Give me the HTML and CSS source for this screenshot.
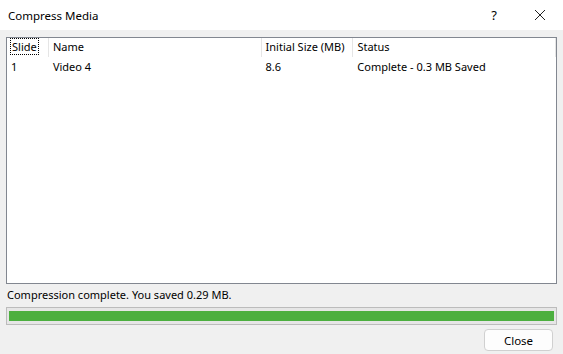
FILE: index.html
```html
<!DOCTYPE html>
<html lang="en">

<head>
    <meta charset="UTF-8">
    <meta name="viewport" content="width=device-width, initial-scale=1.0">
    <title>Compress Media</title>
    <link rel="stylesheet" href="styles.css">
</head>

<body>
    <div class="dialog">
        <header class="titlebar">
            <span class="title">Compress Media</span>
            <span class="help">?</span>
            <span class="close-x">
                <svg width="12" height="12" viewBox="0 0 12 12">
                    <path d="M1 1 L11 11 M11 1 L1 11" stroke="#222" stroke-width="1" fill="none"/>
                </svg>
            </span>
        </header>

        <section class="content">
            <div class="listbox">
                <div class="row head">
                    <div class="cell c-slide"><span class="focus">Slide</span></div>
                    <div class="cell c-name">Name</div>
                    <div class="cell c-size">Initial Size (MB)</div>
                    <div class="cell c-status">Status</div>
                </div>
                <div class="row">
                    <div class="cell c-slide">1</div>
                    <div class="cell c-name">Video 4</div>
                    <div class="cell c-size">8.6</div>
                    <div class="cell c-status">Complete - 0.3 MB Saved</div>
                </div>
            </div>

            <p class="message">Compression complete. You saved 0.29 MB.</p>

            <div class="progress">
                <div class="progress-fill" style="width: 100%"></div>
            </div>

            <div class="buttons">
                <button class="btn">Close</button>
            </div>
        </section>
    </div>
</body>

</html>
```

FILE: styles.css
```css
body {
    margin: 0;
    padding: 0;
    background-color: #f0f0f0;
    font-family: "Noto Sans", "Open Sans", sans-serif;
    font-size: 11px;
    color: #000;
}

.dialog {
    width: 563px;
    height: 354px;
    display: flex;
    flex-direction: column;
}

.titlebar {
    height: 30px;
    background-color: #fff;
    display: flex;
    align-items: center;
    padding-left: 8px;
}

.title {
    flex: 1;
    font-size: 11.5px;
}

.help {
    width: 46px;
    text-align: center;
    font-size: 13px;
}

.close-x {
    width: 46px;
    display: flex;
    justify-content: center;
    align-items: center;
}

.content {
    flex: 1;
    padding: 7px 6px 0 6px;
    display: flex;
    flex-direction: column;
}

.listbox {
    height: 247px;
    background-color: #fff;
    border: 1px solid #828790;
    box-sizing: border-box;
}

.row {
    display: flex;
    height: 18px;
    align-items: center;
}

.head {
    height: 19px;
}

.cell {
    padding-left: 4px;
    box-sizing: border-box;
    white-space: nowrap;
}

.head .cell {
    border-right: 1px solid #e5e5e5;
    height: 19px;
    line-height: 18px;
}

.c-slide {
    width: 42px;
}

.c-name {
    width: 213px;
}

.c-size {
    width: 92px;
}

.c-status {
    width: 203px;
}

.focus {
    border: 1px dotted #000;
    padding: 0 1px;
    margin-left: -1px;
}

.message {
    margin: 3px 0 0 1px;
    height: 16px;
    line-height: 16px;
}

.progress {
    margin-top: 4px;
    height: 18px;
    border: 1px solid #bcbcbc;
    background-color: #e6e6e6;
    box-sizing: border-box;
    padding: 3px 2px;
}

.progress-fill {
    height: 100%;
    background-color: #4caf3f;
}

.buttons {
    display: flex;
    justify-content: flex-end;
    padding: 4px 4px 0 0;
}

.btn {
    width: 69px;
    height: 22px;
    background-color: #fdfdfd;
    border: 1px solid #d0d0d0;
    border-radius: 4px;
    font-family: "Noto Sans", "Open Sans", sans-serif;
    font-size: 11.5px;
    color: #000;
    padding: 0;
}
```
